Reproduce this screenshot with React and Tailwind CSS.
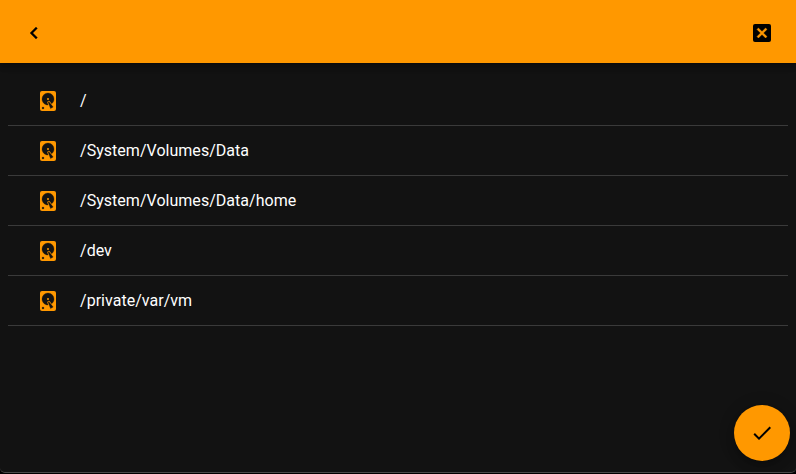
const VOLUMES = [
  "/",
  "/System/Volumes/Data",
  "/System/Volumes/Data/home",
  "/dev",
  "/private/var/vm",
];

function Icon({ className = "", children }) {
  return (
    <svg viewBox="0 0 24 24" className={`size-6 shrink-0 fill-current ${className}`} aria-hidden="true">
      {children}
    </svg>
  );
}

function ChevronLeftIcon() {
  return (
    <Icon>
      <path
        className="stroke-black"
        strokeWidth="0.3"
        d="M15.41,16.58L10.83,12L15.41,7.41L14,6L8,12L14,18L15.41,16.58Z"
      />
    </Icon>
  );
}

function CloseBoxIcon() {
  return (
    <Icon>
      <rect x="3" y="3" width="18" height="18" rx="2" />
      <path
        className="fill-[#ff9800] stroke-[#ff9800]"
        strokeWidth="0.4"
        d="M15.6,17L12,13.4L8.4,17L7,15.6L10.6,12L7,8.4L8.4,7L12,10.6L15.6,7L17,8.4L13.4,12L17,15.6L15.6,17Z"
      />
    </Icon>
  );
}

function HarddiskIcon() {
  return (
    <Icon className="text-[#ff9800]">
      <rect x="4" y="2" width="16" height="20" rx="2" />
      <g className="fill-[#121212] stroke-[#121212]" strokeWidth="0.3">
        <path d="M12,4A6,6 0 0,0 6,10C6,13.31 8.69,16 12.1,16L11.22,13.77C10.95,13.29 11.11,12.68 11.59,12.4L12.45,11.9C12.93,11.63 13.54,11.79 13.82,12.27L15.74,14.69C17.12,13.59 18,11.9 18,10A6,6 0 0,0 12,4Z" />
        <path d="M12.09,13.27L14.58,19.58L17.17,18.08L12.95,12.77L12.09,13.27Z" />
        <circle cx="7" cy="19" r="1" />
      </g>
      <circle cx="12" cy="10" r="1" />
    </Icon>
  );
}

function CheckIcon() {
  return (
    <Icon>
      <path d="M21,7L9,19L3.5,13.5L4.91,12.09L9,16.17L19.59,5.59L21,7Z" />
    </Icon>
  );
}

export default function App() {
  return (
    <div className="h-[474px] w-full overflow-hidden bg-black font-['Roboto',sans-serif]">
      <div className="relative flex h-[473px] flex-col overflow-hidden rounded-b-[5px] border-b border-[#484848] bg-[#121212]">
        <header className="z-10 flex h-[63px] shrink-0 items-center justify-between bg-[#ff9800] px-[22px] pt-[3px] text-black shadow-[0_2px_4px_-1px_rgba(0,0,0,0.2),0_4px_5px_0_rgba(0,0,0,0.14),0_1px_10px_0_rgba(0,0,0,0.12)]">
          <button aria-label="Back">
            <ChevronLeftIcon />
          </button>
          <button aria-label="Close">
            <CloseBoxIcon />
          </button>
        </header>
        <ul className="px-2 pt-[13px]">
          {VOLUMES.map((path) => (
            <li key={path} className="flex h-[50px] items-center gap-5 border-b border-[#3a3a3a] pl-7">
              <HarddiskIcon />
              <span className="text-base tracking-[0.03px] text-white">{path}</span>
            </li>
          ))}
        </ul>
        <button
          aria-label="Confirm"
          className="absolute top-[405px] right-[6px] flex size-14 items-center justify-center rounded-full bg-[#ff9800] text-black shadow-[0_3px_5px_-1px_rgba(0,0,0,0.2),0_6px_10px_0_rgba(0,0,0,0.14),0_1px_18px_0_rgba(0,0,0,0.12)]"
        >
          <CheckIcon />
        </button>
      </div>
    </div>
  );
}
